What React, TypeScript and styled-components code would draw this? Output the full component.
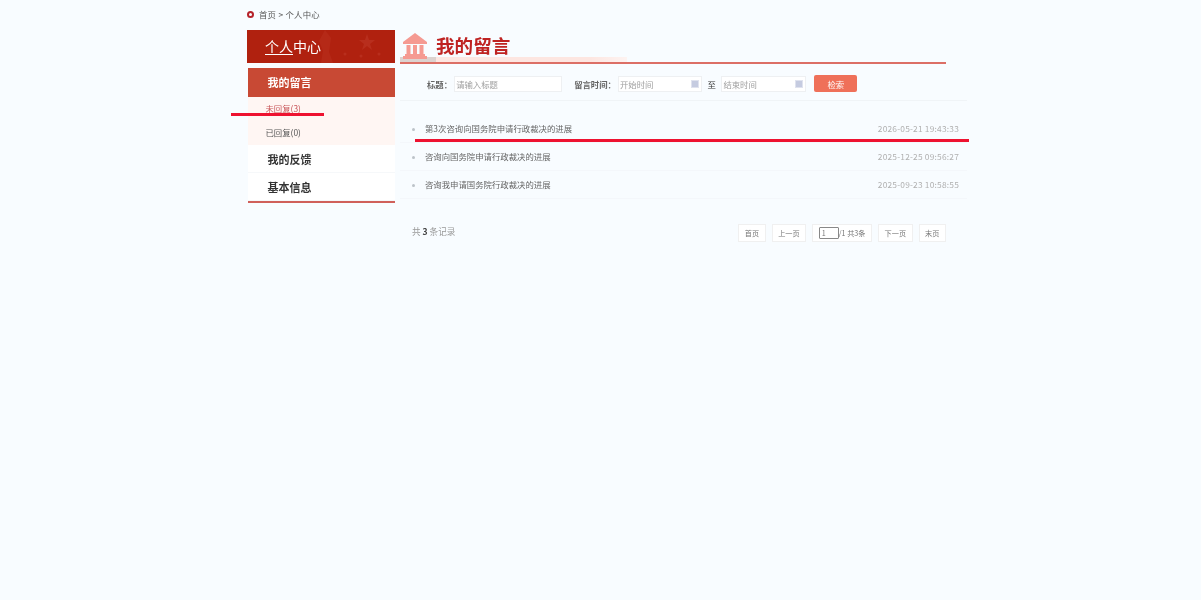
import React from "react";
import styled, { createGlobalStyle } from "styled-components";

const GlobalStyle = createGlobalStyle`
  html, body {
    margin: 0;
    padding: 0;
    background: #f8fcff;
    font-family: "Noto Sans CJK SC", "Noto Sans", sans-serif;
    color: #555;
  }
`;

const Page = styled.div`
  position: relative;
  width: 720px;
  height: 600px;
  margin-left: 247px;
  padding-top: 7px;
  box-sizing: border-box;
  filter: blur(0.45px);
`;

const Breadcrumb = styled.div`
  display: flex;
  align-items: center;
  gap: 5px;
  height: 14px;
  font-size: 8.4px;
  letter-spacing: 0.25px;
  color: #555;
`;

const BreadcrumbDot = styled.span`
  width: 3px;
  height: 3px;
  border: 2px solid #b5232a;
  border-radius: 50%;
`;

const Columns = styled.div`
  display: flex;
  gap: 5px;
  margin-top: 9px;
`;

const Sidebar = styled.aside`
  width: 148px;
  flex: none;
`;

const SideHeader = styled.div`
  position: relative;
  overflow: hidden;
  height: 33px;
  padding-left: 18px;
  background: #b0210f;
  color: #fff;
  font-size: 14px;
  line-height: 33px;

  u {
    text-underline-offset: 2px;
    text-decoration-thickness: 1px;
  }
`;

const HeaderStars = styled.svg`
  position: absolute;
  left: 70px;
  top: 0;
`;

const SideMenu = styled.div`
  margin: 5px 0 0 0.5px;
  background: #fff;
  border-bottom: 2px solid #d0605a;
`;

const MenuItem = styled.div<{ $active?: boolean }>`
  height: ${(p) => (p.$active ? "29px" : "28px")};
  padding-left: 20px;
  font-size: 11px;
  font-weight: 700;
  line-height: 29px;
  box-sizing: border-box;
  background: ${(p) => (p.$active ? "#c84934" : "#fff")};
  color: ${(p) => (p.$active ? "#fff" : "#333")};
  border-bottom: ${(p) => (p.$active ? "none" : "1px solid #f6f8fa")};
`;

const SubItem = styled.div<{ $active?: boolean }>`
  height: 24px;
  padding-left: 18px;
  font-size: 8.4px;
  line-height: 22px;
  background: #fff6f3;
  color: ${(p) => (p.$active ? "#c9565a" : "#555")};
`;

const Main = styled.main`
  width: 567px;
  flex: none;
`;

const TitleBar = styled.div`
  position: relative;
  display: flex;
  align-items: center;
  gap: 8px;
  width: 546px;
  height: 34px;
  padding-left: 2px;
  box-sizing: border-box;
  border-bottom: 2px solid #dc6f66;
`;

const TitleGlow = styled.div`
  position: absolute;
  left: 0;
  bottom: 0;
  width: 227px;
  height: 5px;
  background: linear-gradient(90deg, #dcd2cf 0 36px, #fde6e1 36px 190px, #fdf3f1);
`;

const BankIcon = styled.svg`
  position: relative;
  flex: none;
`;

const PageTitle = styled.h1`
  position: relative;
  margin: 0 0 4px;
  font-size: 18.6px;
  font-weight: 700;
  color: #bf2322;
`;

const SearchBar = styled.div`
  display: flex;
  align-items: center;
  height: 37px;
  padding: 3px 0 0 27px;
  box-sizing: border-box;
  border-bottom: 1px solid #f0f4f7;
  font-size: 8.4px;
`;

const FieldLabel = styled.label`
  margin-right: 2px;
  font-weight: 700;
  color: #666;
`;

const FieldGroup = styled.div`
  display: flex;
  align-items: center;
  margin-left: 12px;
`;

const FieldBox = styled.div<{ $width: number }>`
  display: flex;
  align-items: center;
  justify-content: space-between;
  width: ${(p) => p.$width}px;
  height: 16px;
  padding: 0 2px 0 1px;
  box-sizing: border-box;
  background: #fff;
  border: 1px solid #eef0f2;
  color: #a0a0a0;
`;

const CalendarIcon = styled.span`
  width: 8px;
  height: 8px;
  background: #c5cbe0;
  border: 1px solid #dfe2ee;
  box-sizing: border-box;
`;

const RangeSep = styled.span`
  margin: 0 5.5px;
  color: #333;
`;

const SearchButton = styled.button`
  width: 43px;
  height: 17px;
  margin-left: 8px;
  padding: 0;
  background: #ef7059;
  border: none;
  border-radius: 2px;
  color: #fff;
  font: inherit;
`;

const List = styled.ul`
  margin: 14px 0 0;
  padding: 0;
  list-style: none;
`;

const Row = styled.li`
  position: relative;
  display: flex;
  justify-content: space-between;
  height: 28px;
  padding: 0 8px 0 25px;
  box-sizing: border-box;
  border-bottom: 1px solid #f4f7fb;
  font-size: 8.4px;
  line-height: 27px;
  color: #666;

  &::before {
    content: "";
    position: absolute;
    left: 12px;
    top: 12.5px;
    width: 3px;
    height: 3px;
    background: #bcc3c9;
    border-radius: 50%;
  }
`;

const RowDate = styled.span`
  letter-spacing: 0.2px;
  color: #b0b0b0;
`;

const Footer = styled.div`
  display: flex;
  justify-content: space-between;
  align-items: flex-start;
  width: 546px;
  margin-top: 25px;
  padding-left: 12px;
  box-sizing: border-box;
  font-size: 8.6px;
  line-height: 14px;
  color: #999;

  b {
    color: #444;
  }
`;

const Pager = styled.div`
  display: flex;
  gap: 6px;
`;

const PagerButton = styled.div`
  display: flex;
  align-items: center;
  height: 18px;
  padding: 0 5.5px;
  background: #fff;
  border: 1px solid #f0f0f0;
  box-sizing: border-box;
  font-size: 7.2px;
  color: #777;
`;

const PagerInput = styled.span`
  width: 20px;
  height: 12px;
  padding-left: 2px;
  box-sizing: border-box;
  border: 1px solid #888;
  border-radius: 1px;
  line-height: 10px;
`;

const Annotation = styled.div<{ $left: number; $top: number; $width: number }>`
  position: absolute;
  left: ${(p) => p.$left}px;
  top: ${(p) => p.$top}px;
  width: ${(p) => p.$width}px;
  height: 3px;
  background: #ee1230;
`;

const rows = [
  ["第3次咨询向国务院申请行政裁决的进展", "2026-05-21 19:43:33"],
  ["咨询向国务院申请行政裁决的进展", "2025-12-25 09:56:27"],
  ["咨询我申请国务院行政裁决的进展", "2025-09-23 10:58:55"],
];

const Stars = () => (
  <HeaderStars width="78" height="33" viewBox="0 0 78 33" fill="#cf5142" opacity="0.28">
    <path d="M50 4l2 6h6l-5 4 2 6-5-4-5 4 2-6-5-4h6z" />
    <path d="M8 0l6 8-2 14 4 11H4l2-12-4-10z" opacity="0.6" />
    <circle cx="28" cy="24" r="1.5" />
    <circle cx="44" cy="26" r="1.5" />
    <circle cx="62" cy="24" r="1.5" />
  </HeaderStars>
);

const Bank = () => (
  <BankIcon width="26" height="27" viewBox="0 0 26 27" fill="#f59a92">
    <path d="M13 0L25 9v2H1V9z" />
    <rect x="4.5" y="12" width="4" height="9" />
    <rect x="11" y="12" width="4" height="9" />
    <rect x="17.5" y="12" width="4" height="9" />
    <rect x="3" y="21" width="20" height="2" />
    <rect x="1" y="23" width="24" height="3" />
  </BankIcon>
);

const App = () => {
  return (
    <>
      <GlobalStyle />
      <Page>
        <Breadcrumb>
          <BreadcrumbDot />
          <span>首页 &gt; 个人中心</span>
        </Breadcrumb>
        <Columns>
          <Sidebar>
            <SideHeader>
              <Stars />
              <u>个人</u>中心
            </SideHeader>
            <SideMenu>
              <MenuItem $active>我的留言</MenuItem>
              <SubItem $active>未回复(3)</SubItem>
              <SubItem>已回复(0)</SubItem>
              <MenuItem>我的反馈</MenuItem>
              <MenuItem>基本信息</MenuItem>
            </SideMenu>
          </Sidebar>
          <Main>
            <TitleBar>
              <TitleGlow />
              <Bank />
              <PageTitle>我的留言</PageTitle>
            </TitleBar>
            <SearchBar>
              <FieldLabel>标题：</FieldLabel>
              <FieldBox $width={108}>请输入标题</FieldBox>
              <FieldGroup>
                <FieldLabel>留言时间：</FieldLabel>
                <FieldBox $width={84}>
                  开始时间
                  <CalendarIcon />
                </FieldBox>
                <RangeSep>至</RangeSep>
                <FieldBox $width={85}>
                  结束时间
                  <CalendarIcon />
                </FieldBox>
              </FieldGroup>
              <SearchButton>检索</SearchButton>
            </SearchBar>
            <List>
              {rows.map(([title, date]) => (
                <Row key={date}>
                  <span>{title}</span>
                  <RowDate>{date}</RowDate>
                </Row>
              ))}
            </List>
            <Footer>
              <span>
                共 <b>3</b> 条记录
              </span>
              <Pager>
                <PagerButton>首页</PagerButton>
                <PagerButton>上一页</PagerButton>
                <PagerButton>
                  <PagerInput>1</PagerInput>/1 共3条
                </PagerButton>
                <PagerButton>下一页</PagerButton>
                <PagerButton>末页</PagerButton>
              </Pager>
            </Footer>
          </Main>
        </Columns>
        <Annotation $left={-16} $top={113} $width={93} />
        <Annotation $left={168} $top={139} $width={554} />
      </Page>
    </>
  );
};

export default App;
